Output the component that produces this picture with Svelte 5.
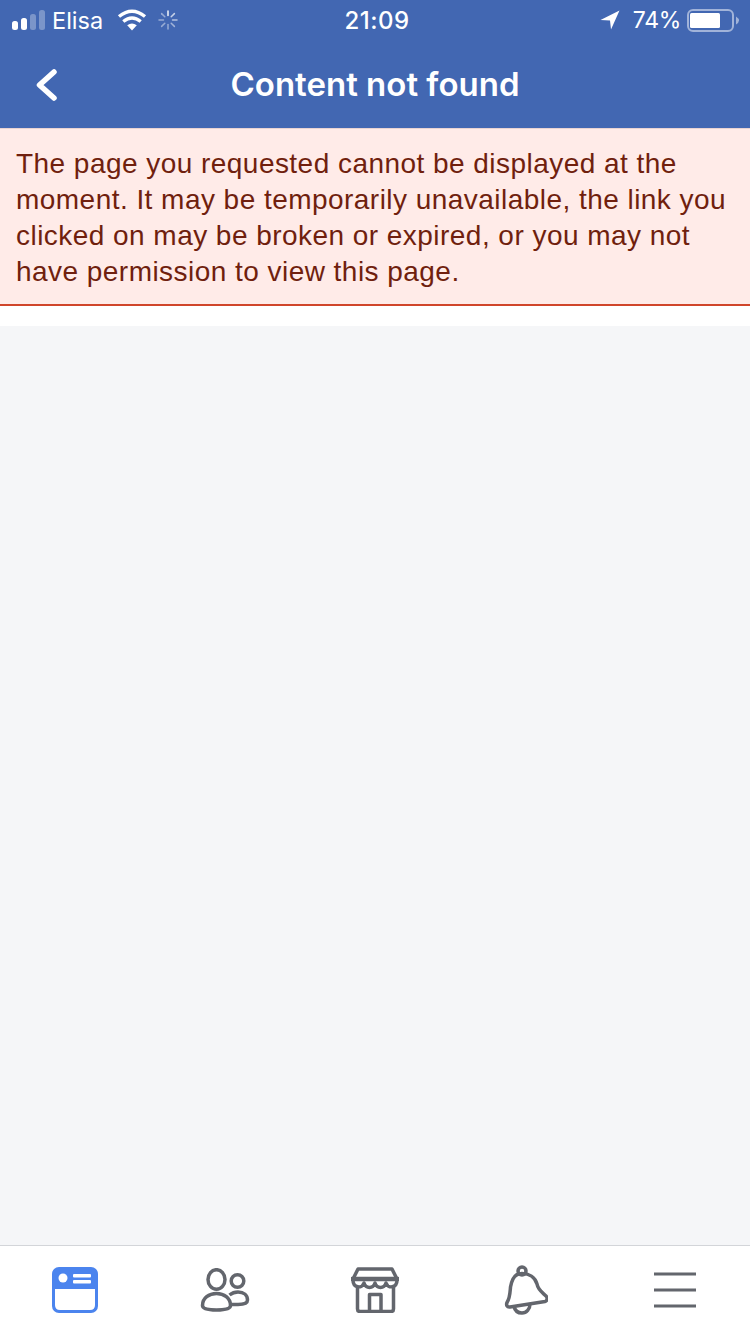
<script>
const tabs = ['feed', 'friends', 'market', 'bell', 'menu'];
</script>

<style>
:global(body) {
  margin: 0;
  background: #fff;
}

.page {
  display: flex;
  flex-direction: column;
  height: 1334px;
  width: 750px;
  overflow: hidden;
  font-family: 'Inter', 'Liberation Sans', sans-serif;
}

.status {
  display: flex;
  align-items: center;
  justify-content: space-between;
  height: 40px;
  padding: 0 10px 0 12px;
  background: #4267b2;
  color: #fff;
  font-size: 24px;
  box-sizing: border-box;
}

.side {
  display: flex;
  align-items: center;
  flex: 1;
}

.side.right {
  justify-content: flex-end;
}

.carrier {
  font-size: 23.5px;
  margin-left: 6px;
  margin-right: 14px;
}

.spinner {
  margin-left: 11px;
}

.time {
  font-weight: 500;
  letter-spacing: 0.5px;
  margin-left: 2px;
}

.percent {
  font-size: 23px;
  letter-spacing: -0.3px;
  margin-left: 13px;
  margin-right: 6px;
}

.nav {
  display: grid;
  grid-template-columns: 1fr auto 1fr;
  align-items: center;
  height: 88px;
  background: #4267b2;
  color: #fff;
  font-size: 33px;
  font-weight: 600;
}

.back {
  margin: 2px 0 0 35px;
}

.alert {
  background: #ffebe8;
  border-bottom: 2px solid #d0452b;
  border-top: 1px solid #e9d3d2;
  box-sizing: border-box;
  color: #701f0e;
  font-family: 'Liberation Sans', sans-serif;
  font-size: 28px;
  height: 178px;
  line-height: 36px;
  letter-spacing: 0.46px;
  padding: 17px 16px 0;
}

.alert p {
  margin: 0;
  white-space: nowrap;
}

.gap {
  height: 20px;
  background: #fff;
}

.content {
  flex: 1;
  background: #f5f6f8;
}

.tabs {
  display: grid;
  grid-template-columns: repeat(5, 150px);
  height: 89px;
  box-sizing: border-box;
  border-top: 1px solid #d3d5d9;
  background: #fff;
}

.tab {
  display: flex;
  align-items: center;
  justify-content: center;
}
</style>

<div class="page">
  <div class="status">
    <div class="side">
      <svg width="34" height="20" viewBox="0 0 34 20">
        <rect x="0" y="11" width="6" height="9" rx="2.500" fill="#fff"/>
        <rect x="9" y="8" width="6" height="12" rx="2.500" fill="#fff"/>
        <rect x="18" y="4" width="6" height="16" rx="2.500" fill="#fff" opacity="0.3"/>
        <rect x="27" y="0" width="6" height="20" rx="2.500" fill="#fff" opacity="0.3"/>
      </svg>
      <span class="carrier">Elisa</span>
      <svg width="30" height="22" viewBox="0 0 30 22">
        <path d="M15 21.500 L10.200 16.300 Q15 12.500 19.800 16.300 Z" fill="#fff"/>
        <path d="M6.300 12.500 Q15 5.500 23.700 12.500" fill="none" stroke="#fff" stroke-width="3.400"/>
        <path d="M2 7.500 Q15 -3 28 7.500" fill="none" stroke="#fff" stroke-width="3.400"/>
      </svg>
      <svg class="spinner" width="20" height="20" viewBox="0 0 20 20" stroke-width="1.500" stroke-linecap="round" stroke="#fff">
        <path d="M10 1V5.500" opacity="0.950"/>
        <path d="M16.400 3.600L13.200 6.800" opacity="0.700"/>
        <path d="M19 10H14.500" opacity="0.600"/>
        <path d="M16.400 16.400L13.200 13.200" opacity="0.500"/>
        <path d="M10 19V14.500" opacity="0.450"/>
        <path d="M3.600 16.400L6.800 13.200" opacity="0.450"/>
        <path d="M1 10H5.500" opacity="0.450"/>
        <path d="M3.600 3.600L6.800 6.800" opacity="0.450"/>
      </svg>
    </div>
    <span class="time">21:09</span>
    <div class="side right">
      <svg width="20" height="20" viewBox="0 0 20 20">
        <path d="M19.500 0.500 L0.500 10 L10 10.500 L11 19.500 Z" fill="#fff"/>
      </svg>
      <span class="percent">74%</span>
      <svg width="53" height="24" viewBox="0 0 53 24">
        <rect x="1" y="2" width="45" height="21" rx="5" fill="none" stroke="#fff" stroke-opacity="0.5" stroke-width="2"/>
        <rect x="3" y="5" width="30" height="15" rx="1.500" fill="#fff"/>
        <path d="M49 8.500 Q52 10.500 52 12.500 Q52 14.500 49 16.500 Z" fill="#fff" opacity="0.5"/>
      </svg>
    </div>
  </div>

  <div class="nav">
    <svg class="back" width="22" height="32" viewBox="0 0 22 32">
      <path d="M19 3 L4.500 16 L19 29" fill="none" stroke="#fff" stroke-width="5.500" stroke-linecap="round" stroke-linejoin="round"/>
    </svg>
    <span>Content not found</span>
  </div>

  <div class="alert">
    <p>The page you requested cannot be displayed at the</p>
    <p>moment. It may be temporarily unavailable, the link you</p>
    <p>clicked on may be broken or expired, or you may not</p>
    <p>have permission to view this page.</p>
  </div>

  <div class="gap"></div>
  <div class="content"></div>

  <div class="tabs">
    {#each tabs as tab}
      <div class="tab">
        {#if tab === 'feed'}
          <svg width="46" height="46" viewBox="0 0 46 46">
            <rect x="0" y="0" width="46" height="46" rx="7" fill="#4b84ee"/>
            <path d="M3 22 H43 V38 Q43 43 38 43 H8 Q3 43 3 38 Z" fill="#fff"/>
            <circle cx="11" cy="11" r="4.500" fill="#fff"/>
            <rect x="21" y="7" width="18" height="3.500" rx="1" fill="#fff"/>
            <rect x="21" y="13" width="18" height="3.500" rx="1" fill="#fff"/>
          </svg>
        {:else if tab === 'friends'}
          <svg width="50" height="44" viewBox="0 0 50 44" fill="none" stroke="#63666d" stroke-width="3.500">
            <ellipse cx="16.500" cy="11.500" rx="8.500" ry="9.800"/>
            <circle cx="37.500" cy="13" r="6.300"/>
            <path d="M2.500 37.500 C2.500 30 9 25.500 16.500 25.500 C24 25.500 30.500 30 30.500 37.500 C30.500 40.500 26 42 16.500 42 C7 42 2.500 40.500 2.500 37.500 Z"/>
            <path d="M29.500 27 C32 25 35 24 38 24 C44 24 47.500 27.500 47.500 32 C47.500 35 44 36.500 38 36.500 H30.500"/>
          </svg>
        {:else if tab === 'market'}
          <svg width="48" height="46" viewBox="0 0 48 46" fill="none" stroke="#63666d" stroke-width="3.500" stroke-linejoin="round">
            <path d="M7 2 H41 L46 12 H2 Z"/>
            <path d="M1 12 H47" stroke-width="4.500" stroke-linecap="round"/>
            <path d="M2 13 C2 21 11 22 13 16 C15 22 22 22 24 16 C26 22 33 22 35 16 C37 22 46 21 46 13"/>
            <path d="M6.500 20 V42 Q6.500 44.500 9 44.500 H40 Q42.500 44.500 42.500 42 V20"/>
            <path d="M18.500 44.500 V27.500 H30 V44.500"/>
          </svg>
        {:else if tab === 'bell'}
          <svg width="46" height="50" viewBox="-2 0 46 50" fill="none" stroke="#63666d" stroke-width="3.500" stroke-linejoin="round">
            <circle cx="18" cy="6" r="4"/>
            <path d="M9 14 C11 10 14 8.500 18 8.500 C25 8.500 31 12 33 19 C34 25 39 28 42 31 C44 33 43 36 41 36.500 L6 42 C3 42.500 2 40 3 37.500 C6 33 6 28 6.500 22 C7 19 8 16 9 14 Z"/>
            <path d="M10 41.500 C11 46 14.500 48 18 48 C22.500 48 26 44 26 39"/>
          </svg>
        {:else}
          <svg width="42" height="36" viewBox="0 0 42 36" stroke="#63666d" stroke-width="3">
            <path d="M0 2H42M0 18H42M0 34H42"/>
          </svg>
        {/if}
      </div>
    {/each}
  </div>
</div>
